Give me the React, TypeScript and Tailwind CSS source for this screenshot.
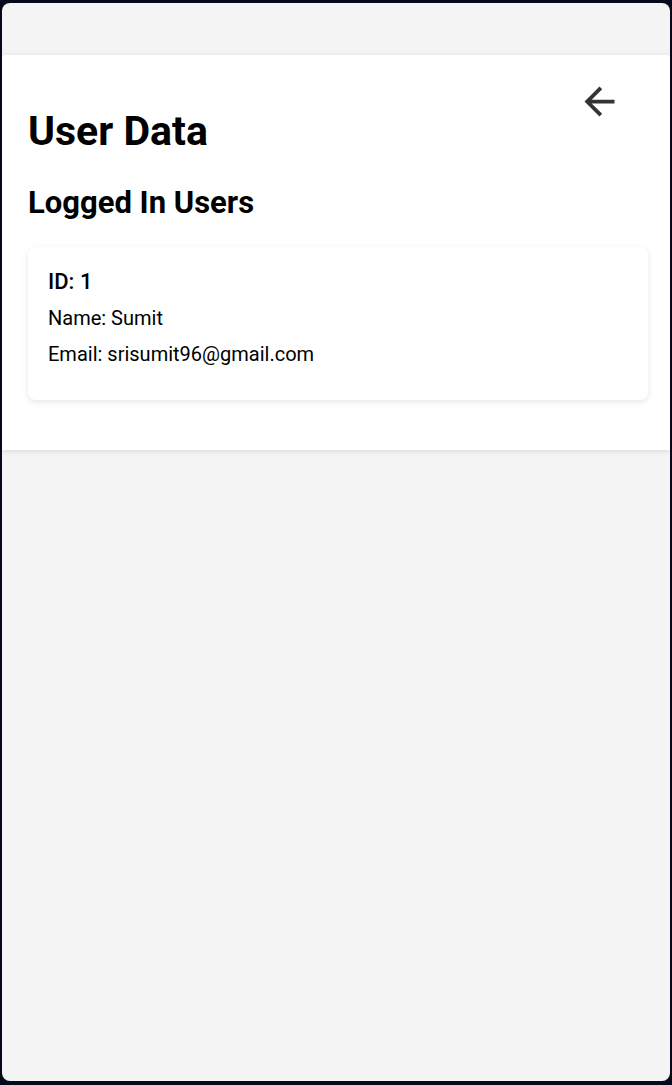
import React from "react";

const users = [{ id: 1, name: "Sumit", email: "srisumit96@gmail.com" }];

const BackArrow = () => (
  <svg viewBox="0 0 24 24" className="h-full w-full" fill="#333333">
    <path d="M20 11H7.83l5.59-5.59L12 4l-8 8 8 8 1.41-1.41L7.83 13H20v-2z" />
  </svg>
);

const App = () => {
  return (
    <div
      className="h-[1085px] bg-[#050a1b] pl-[2px] pr-[2px] pt-[3px] pb-[4px]"
      style={{ fontFamily: "Roboto, 'Liberation Sans', sans-serif" }}
    >
      <div className="h-full overflow-hidden rounded-lg bg-[#f4f4f4] pt-[52px]">
        <div className="relative rounded-t bg-white px-[26px] pt-[52px] pb-[50px] shadow-[0_1px_5px_rgba(0,0,0,0.12)]">
          <button
            aria-label="Back"
            className="absolute top-[24px] right-[48px] h-[45px] w-[45px]"
          >
            <BackArrow />
          </button>

          <h1 className="text-[41px] leading-[48px] font-bold text-black">
            User Data
          </h1>
          <h2 className="mt-[29px] text-[31px] leading-[38px] font-bold text-black">
            Logged In Users
          </h2>

          {users.map((user) => (
            <div
              key={user.id}
              className="mt-[25px] mr-[-4px] rounded-lg bg-white px-[20px] pt-[17px] pb-[28px] shadow-[0_2px_6px_rgba(0,0,0,0.1)]"
            >
              <p className="text-[22px] leading-[36px] font-medium text-black">
                ID: {user.id}
              </p>
              <p className="text-[20px] leading-[36px] text-black">
                Name: {user.name}
              </p>
              <p className="text-[20px] leading-[36px] text-black">
                Email: {user.email}
              </p>
            </div>
          ))}
        </div>
      </div>
    </div>
  );
};

export default App;
